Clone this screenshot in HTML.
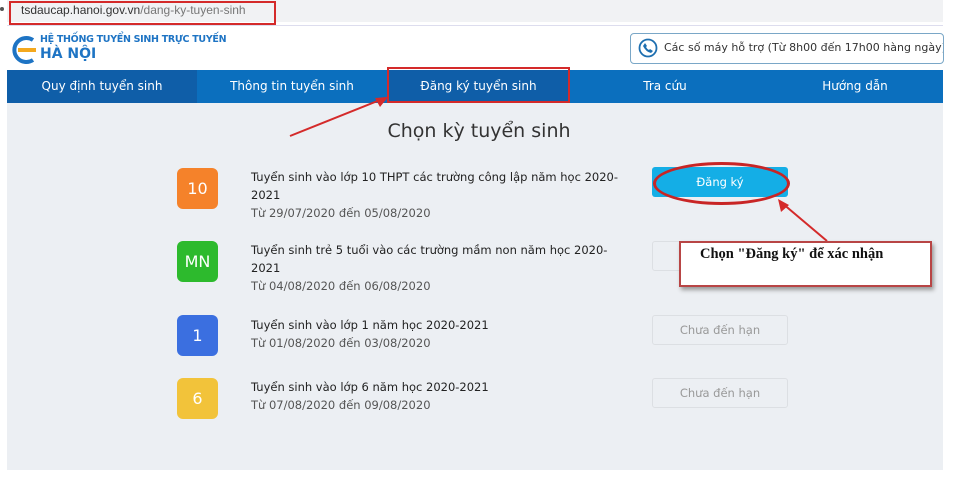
<!DOCTYPE html>
<html><head><meta charset="utf-8"><style>
*{margin:0;padding:0;box-sizing:border-box}
body{width:954px;height:479px;background:#fff;font-family:"DejaVu Sans","Liberation Sans",sans-serif;position:relative;overflow:hidden}
.abs{position:absolute}
.url{left:7px;top:0;width:936px;height:22px;background:#f1f2f4;font-size:12px;color:#333;padding:3px 0 0 14px;font-family:"Liberation Sans",sans-serif}
.url span{color:#777}
.nav{left:7px;top:70px;width:936px;height:33px;background:#0b6fbe;color:#fff;font-size:12px}
.nav div{position:absolute;top:0;height:33px;line-height:32px;text-align:center}
.main{left:7px;top:103px;width:936px;height:367px;background:#eceff3}
.badge{width:41px;height:41px;border-radius:6px;color:#fff;font-size:16px;text-align:center;line-height:41px}
.t{font-size:11.5px;color:#222;line-height:18px;width:370px}
.d{color:#555}
.btn{width:136px;height:30px;border:1px solid #dcdfe3;border-radius:3px;color:#999;font-size:11.5px;text-align:center;line-height:28px;background:#eceff3}
</style></head><body>
<div class="abs url">tsdaucap.hanoi.gov.vn<span>/dang-ky-tuyen-sinh</span></div>
<div class="abs" style="left:0;top:7px;width:4px;height:4px;background:#555;border-radius:2px"></div>
<div class="abs" style="left:9px;top:1px;width:267px;height:24px;border:2px solid #d42a2a"></div>
<div class="abs" style="left:7px;top:25px;width:936px;height:1px;background:#dde"></div>
<svg class="abs" style="left:9px;top:35px" width="30" height="30"><path d="M24 5 A12 12 0 1 0 24 25" stroke="#1e74c4" stroke-width="4" fill="none"/><rect x="9" y="13" width="18" height="4" fill="#f4a81d"/></svg>
<div class="abs" style="left:40px;top:34px;font-size:9.5px;font-weight:bold;color:#1e74c4;letter-spacing:-0.3px">HỆ THỐNG TUYỂN SINH TRỰC TUYẾN</div>
<div class="abs" style="left:40px;top:46px;font-size:14px;font-weight:bold;color:#1e74c4">HÀ NỘI</div>
<div class="abs" style="left:630px;top:33px;width:314px;height:31px;border:1px solid #7aa7c7;border-radius:4px;font-size:11px;color:#333;padding:7px 0 0 33px;white-space:nowrap;overflow:hidden">Các số máy hỗ trợ (Từ 8h00 đến 17h00 hàng ngày)</div>
<svg class="abs" style="left:638px;top:38px" width="20" height="20"><circle cx="10" cy="10" r="8.5" stroke="#1e6fb0" stroke-width="1.8" fill="none"/><path d="M7 5 L9 8 L8 9 Q9 11 11 12 L12 11 L15 13 L13 15 Q8 14 5 8 Z" fill="#1e6fb0"/></svg>
<div class="abs nav">
<div style="left:0;width:190px;background:#0f5ea8">Quy định tuyển sinh</div>
<div style="left:190px;width:190px">Thông tin tuyển sinh</div>
<div style="left:380px;width:183px;background:#0f5ea8">Đăng ký tuyển sinh</div>
<div style="left:563px;width:190px">Tra cứu</div>
<div style="left:753px;width:190px">Hướng dẫn</div>
</div>
<div class="abs" style="left:387px;top:67px;width:183px;height:36px;border:2px solid #d42a2a"></div>
<div class="abs main"></div>
<div class="abs" style="left:0;top:120px;width:954px;text-align:center;font-size:19px;color:#333;padding-left:4px">Chọn kỳ tuyển sinh</div>
<svg class="abs" style="left:285px;top:92px" width="110" height="50"><path d="M5 44 L100 6" stroke="#d42a2a" stroke-width="2"/><path d="M103 5 L90 6 L95 15 Z" fill="#d42a2a"/></svg>
<div class="abs badge" style="left:177px;top:168px;background:#f5822a">10</div>
<div class="abs t" style="left:251px;top:168px">Tuyển sinh vào lớp 10 THPT các trường công lập năm học 2020-2021<br><span class="d">Từ 29/07/2020 đến 05/08/2020</span></div>
<div class="abs badge" style="left:177px;top:241px;background:#2dba2d">MN</div>
<div class="abs t" style="left:251px;top:241px">Tuyển sinh trẻ 5 tuổi vào các trường mầm non năm học 2020-2021<br><span class="d">Từ 04/08/2020 đến 06/08/2020</span></div>
<div class="abs badge" style="left:177px;top:315px;background:#3b6fe0">1</div>
<div class="abs t" style="left:251px;top:316px">Tuyển sinh vào lớp 1 năm học 2020-2021<br><span class="d">Từ 01/08/2020 đến 03/08/2020</span></div>
<div class="abs badge" style="left:177px;top:378px;background:#f2c33a">6</div>
<div class="abs t" style="left:251px;top:378px">Tuyển sinh vào lớp 6 năm học 2020-2021<br><span class="d">Từ 07/08/2020 đến 09/08/2020</span></div>
<div class="abs" style="left:652px;top:167px;width:136px;height:30px;background:#14aee6;border-radius:3px;color:#fff;font-size:11.5px;text-align:center;line-height:30px">Đăng ký</div>
<div class="abs" style="left:653px;top:162px;width:137px;height:43px;border:3px solid #c82525;border-radius:50%"></div>
<div class="abs btn" style="left:652px;top:241px">Chưa đến hạn</div>
<div class="abs btn" style="left:652px;top:315px">Chưa đến hạn</div>
<div class="abs btn" style="left:652px;top:378px">Chưa đến hạn</div>
<svg class="abs" style="left:770px;top:195px" width="70" height="50"><path d="M57 46 L12 8" stroke="#d42a2a" stroke-width="2"/><path d="M8 4 L11 17 L19 10 Z" fill="#d42a2a"/></svg>
<div class="abs" style="left:679px;top:241px;width:253px;height:46px;background:#fff;border:2px solid #b84545;box-shadow:2px 3px 4px #999;font-family:'Liberation Serif',serif;font-weight:bold;font-size:14.5px;color:#111;padding:3px 0 0 19px">Chọn "Đăng ký" để xác nhận</div>
</body></html>
